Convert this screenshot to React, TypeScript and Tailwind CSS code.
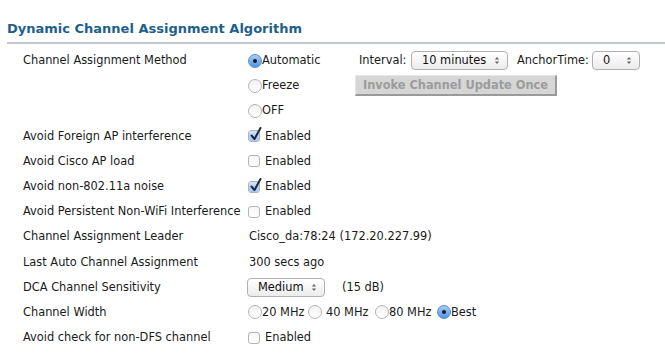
import React from "react";

const font = { fontFamily: '"DejaVu Sans", Verdana, sans-serif' };

function Radio({ checked }: { checked?: boolean }) {
  return checked ? (
    <span className="inline-flex items-center justify-center w-[14px] h-[14px] rounded-full border border-[#5a8fd6] bg-gradient-to-b from-[#a9cdf7] to-[#4f93e6] shrink-0">
      <span className="w-[4px] h-[4px] rounded-full bg-[#1a1a1a]" />
    </span>
  ) : (
    <span className="inline-block w-[14px] h-[14px] rounded-full border border-[#b5b5b5] bg-gradient-to-b from-[#f2f2f2] to-[#ffffff] shrink-0" />
  );
}

function Check({ checked }: { checked?: boolean }) {
  return (
    <span className="relative inline-block w-[12px] h-[12px] rounded-[3px] border border-[#b3b3b3] bg-gradient-to-b from-[#f6f6f6] to-[#ffffff] shrink-0">
      {checked && (
        <>
          <span className="absolute inset-0 rounded-[2px] bg-gradient-to-b from-[#d2e4fb] to-[#9fc4f2]" />
          <svg className="absolute left-[1px] top-[-4px]" width="12" height="14" viewBox="0 0 12 14">
            <path d="M1.5 8.5 L4.5 12 L10.5 1" fill="none" stroke="#1b2a44" strokeWidth="2" strokeLinecap="round" strokeLinejoin="round" />
          </svg>
        </>
      )}
    </span>
  );
}

function Select({ value, width }: { value: string; width: string }) {
  return (
    <span className={`inline-flex items-center justify-between h-[19px] rounded-[4px] border border-[#b0b0b0] bg-gradient-to-b from-[#ffffff] to-[#ececec] pl-[10px] pr-[7px] text-[11.4px] text-[#111] ${width}`}>
      <span>{value}</span>
      <svg width="6" height="9" viewBox="0 0 6 9">
        <path d="M0.8 3.5 L3 1 L5.2 3.5 Z" fill="#666" />
        <path d="M0.8 5.5 L3 8 L5.2 5.5 Z" fill="#666" />
      </svg>
    </span>
  );
}

function Row({ label, children }: { label: string; children: React.ReactNode }) {
  return (
    <div className="flex items-center h-[25.2px]">
      <div className="w-[224px] shrink-0 whitespace-nowrap">{label}</div>
      <div className="flex items-center">{children}</div>
    </div>
  );
}

function Enabled({ checked }: { checked?: boolean }) {
  return (
    <span className="pl-[1px] flex items-center gap-[5px]">
      <Check checked={checked} />
      Enabled
    </span>
  );
}

export default function App() {
  return (
    <div className="w-[665px] h-[357px] bg-white overflow-hidden text-[11.4px] text-[#1a1a1a]" style={font}>
      <div className="pl-[7px] pt-[21px]">
        <div className="text-[13px] font-bold text-[#1e5f8c] leading-[16px]">Dynamic Channel Assignment Algorithm</div>
      </div>
      <div className="ml-[7px] mt-[5px] h-[2px] bg-[#c4c7d6]" />
      <div className="pl-[23px] pt-[4px]">
        <div className="flex">
          <div className="w-[224px] shrink-0 h-[25.2px] flex items-center">Channel Assignment Method</div>
          <div className="flex flex-col">
            <div className="flex items-center h-[25.2px]">
              <span className="flex items-center w-[112px] pl-[1px]"><Radio checked /><span>Automatic</span></span>
              <span className="w-[52px]">Interval:</span>
              <Select value="10 minutes" width="w-[97px]" />
              <span className="ml-[9px] w-[75px]">AnchorTime:</span>
              <Select value="0" width="w-[48px]" />
            </div>
            <div className="flex items-center h-[25.2px]">
              <span className="flex items-center w-[108px] pl-[1px]"><Radio /><span>Freeze</span></span>
              <span className="inline-flex items-center justify-center w-[202px] h-[21px] bg-[#d6d6d6] border-t border-l border-[#e6e6e6] border-r-2 border-b-2 border-r-[#9a9a9a] border-b-[#9a9a9a] text-[#9c9c9c] font-bold">Invoke Channel Update Once</span>
            </div>
            <div className="flex items-center h-[25.2px] pl-[1px]"><Radio /><span>OFF</span></div>
          </div>
        </div>
        <Row label="Avoid Foreign AP interference"><Enabled checked /></Row>
        <Row label="Avoid Cisco AP load"><Enabled /></Row>
        <Row label="Avoid non-802.11a noise"><Enabled checked /></Row>
        <Row label="Avoid Persistent Non-WiFi Interference"><Enabled /></Row>
        <Row label="Channel Assignment Leader"><span className="pl-[2px]">Cisco_da:78:24 (172.20.227.99)</span></Row>
        <Row label="Last Auto Channel Assignment"><span className="pl-[2px]">300 secs ago</span></Row>
        <Row label="DCA Channel Sensitivity">
          <Select value="Medium" width="w-[78px]" />
          <span className="ml-[17px]">(15 dB)</span>
        </Row>
        <Row label="Channel Width">
          <span className="pl-[1px] flex items-center">
            <Radio /><span className="w-[46px]">20 MHz</span>
            <Radio /><span className="ml-[4px] w-[49px]">40 MHz</span>
            <Radio /><span className="w-[48px]">80 MHz</span>
            <Radio checked /><span>Best</span>
          </span>
        </Row>
        <Row label="Avoid check for non-DFS channel"><Enabled /></Row>
      </div>
    </div>
  );
}
